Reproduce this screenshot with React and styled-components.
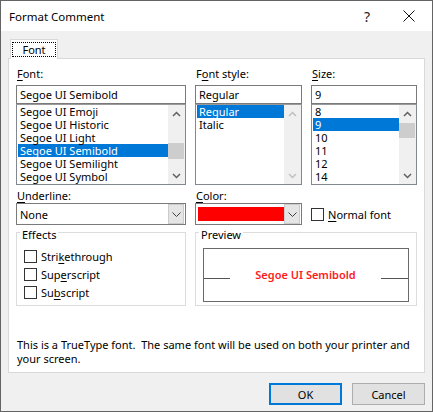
import React from 'react';
import styled, { createGlobalStyle } from 'styled-components';

const GlobalStyle = createGlobalStyle`
  html, body {
    margin: 0;
    padding: 0;
    background: #fff;
  }
  body {
    font-family: "Noto Sans", "Liberation Sans", sans-serif;
    font-size: 11px;
    color: #000;
  }
  * {
    box-sizing: border-box;
  }
`;

const Window = styled.div`
  width: 433px;
  height: 412px;
  border: 1px solid #646464;
  background: #f0f0f0;
  display: flex;
  flex-direction: column;
  overflow: hidden;
`;

const TitleBar = styled.div`
  height: 30px;
  flex-shrink: 0;
  background: #fff;
  display: flex;
  align-items: center;
  padding-left: 8px;
`;

const Title = styled.div`
  flex: 1;
  font-size: 11.5px;
`;

const TitleButton = styled.div`
  width: 46px;
  height: 30px;
  display: flex;
  align-items: center;
  justify-content: center;
  font-size: 14px;
  color: #222;
  padding-left: ${p => p.$shift || 0}px;
`;

const Body = styled.div`
  flex: 1;
  display: flex;
  flex-direction: column;
  padding: 8px 7px 7px 7px;
`;

const TabStrip = styled.div`
  display: flex;
`;

const Tab = styled.div`
  position: relative;
  z-index: 1;
  margin-left: 2px;
  margin-bottom: -1px;
  width: 48px;
  height: 20px;
  padding: 2px 1px 0 1px;
  border: 1px solid #d9d9d9;
  border-bottom: none;
  background: #fff;
`;

const FocusRect = styled.div`
  width: 44px;
  height: 15px;
  border: 1px dotted #000;
  display: flex;
  align-items: center;
  justify-content: center;
  line-height: 13px;
`;

const Panel = styled.div`
  background: #fff;
  border: 1px solid #d9d9d9;
  padding: 7px 7px 6px 7px;
`;

const Grid = styled.div`
  display: grid;
  grid-template-columns: 170px 107px 106px;
  column-gap: 9px;
`;

const Field = styled.div`
  display: flex;
  flex-direction: column;
`;

const Label = styled.div`
  line-height: 15px;
  margin: ${p => (p.$spaced ? '3px 0 0 1px' : '0 0 4px 1px')};
  white-space: nowrap;
`;

const Key = styled.span`
  text-decoration: underline;
  text-underline-offset: 2px;
  text-decoration-thickness: 1px;
`;

const TextBox = styled.div`
  height: 19px;
  border: 1px solid #7a7a7a;
  padding-left: 3px;
  line-height: 17px;
  background: #fff;
`;

const ListBox = styled.div`
  height: 81px;
  border: 1px solid #828790;
  border-top-color: #9a9a9a;
  display: flex;
  background: #fff;
`;

const Items = styled.div`
  flex: 1;
  padding-left: 1px;
`;

const Item = styled.div`
  height: 13px;
  line-height: 13px;
  padding-left: 2px;
  white-space: nowrap;
  background: ${p => (p.$selected ? '#0078d7' : 'transparent')};
  color: ${p => (p.$selected ? '#fff' : '#000')};
`;

const Scrollbar = styled.div`
  width: 17px;
  display: flex;
  flex-direction: column;
  background: #f0f0f0;
`;

const Arrow = styled.div`
  height: 17px;
  display: flex;
  align-items: center;
  justify-content: center;
`;

const Track = styled.div`
  flex: 1;
`;

const Thumb = styled.div`
  margin-top: ${p => p.$offset}px;
  height: ${p => p.$size}px;
  margin-right: 1px;
  background: #cdcdcd;
`;

const Combo = styled.div`
  height: 22px;
  border: 1px solid #7a7a7a;
  background: #fff;
  display: flex;
  align-items: center;
`;

const ComboText = styled.div`
  flex: 1;
  padding-left: 3px;
`;

const Swatch = styled.div`
  width: 86px;
  height: 14px;
  margin-left: 2px;
  margin-right: auto;
  background: #ff0000;
`;

const DropButton = styled.div`
  width: 16px;
  height: 20px;
  margin-right: 1px;
  background: #e5e5e5;
  border: 1px solid #cbcbcb;
  display: flex;
  align-items: center;
  justify-content: center;
`;

const CheckRow = styled.div`
  display: flex;
  align-items: center;
  gap: 4px;
  height: ${p => p.$height || 18}px;
  align-self: ${p => (p.$end ? 'end' : 'auto')};
`;

const CheckBox = styled.div`
  width: 13px;
  height: 13px;
  border: 1px solid #333;
  background: #fff;
  flex-shrink: 0;
`;

const GroupBox = styled.div`
  grid-column: ${p => p.$span || 'auto'};
  height: 74px;
  margin-top: 7px;
  border: 1px solid #dcdcdc;
  display: flex;
  flex-direction: column;
`;

const Caption = styled.div`
  align-self: flex-start;
  margin: -5px 0 0 3px;
  padding: 0 2px;
  line-height: 14px;
  background: #fff;
`;

const CheckList = styled.div`
  display: flex;
  flex-direction: column;
  padding: 5px 0 0 7px;
`;

const PreviewBox = styled.div`
  margin: 6px 7px 0 7px;
  height: 54px;
  border: 1px solid #6a6a6a;
  display: flex;
  flex-direction: column;
  justify-content: center;
`;

const PreviewLine = styled.div`
  display: flex;
  align-items: baseline;
  line-height: 16px;
`;

const Rule = styled.div`
  width: ${p => p.$width}px;
  height: 1px;
  background: #555;
`;

const PreviewText = styled.div`
  flex: 1;
  text-align: center;
  color: #ff1a1a;
  font-weight: 600;
`;

const Note = styled.div`
  margin-top: 32px;
  line-height: 14px;
  padding-left: 1px;
  white-space: nowrap;
`;

const ButtonRow = styled.div`
  display: flex;
  justify-content: flex-end;
  gap: 10px;
  margin-top: 10px;
`;

const Button = styled.div`
  width: 73px;
  height: 22px;
  display: flex;
  align-items: center;
  justify-content: center;
  background: #e1e1e1;
  border: ${p => (p.$default ? '2px solid #0078d7' : '1px solid #adadad')};
`;

const Chevron = ({ up, color = '#606060' }) => (
  <svg width="9" height="6" viewBox="0 0 9 6">
    <polyline
      points={up ? '1,5 4.5,1.5 8,5' : '1,1 4.5,4.5 8,1'}
      fill="none"
      stroke={color}
      strokeWidth="1.5"
    />
  </svg>
);

const ComboChevron = () => (
  <svg width="9" height="5" viewBox="0 0 9 5">
    <polyline points="0.5,0.5 4.5,4.5 8.5,0.5" fill="none" stroke="#404040" strokeWidth="1" />
  </svg>
);

const CloseIcon = () => (
  <svg width="12" height="12" viewBox="0 0 12 12">
    <path d="M0.5 0.5 L11.5 11.5 M11.5 0.5 L0.5 11.5" stroke="#111" strokeWidth="1" />
  </svg>
);

const List = ({ items, selected, thumb }) => (
  <ListBox>
    <Items>
      {items.map(item => (
        <Item key={item} $selected={item === selected}>{item}</Item>
      ))}
    </Items>
    <Scrollbar>
      <Arrow><Chevron up color={thumb ? '#606060' : '#c0c0c0'} /></Arrow>
      <Track>{thumb && <Thumb $offset={thumb[0]} $size={thumb[1]} />}</Track>
      <Arrow><Chevron color={thumb ? '#606060' : '#c0c0c0'} /></Arrow>
    </Scrollbar>
  </ListBox>
);

const fonts = [
  'Segoe UI Emoji',
  'Segoe UI Historic',
  'Segoe UI Light',
  'Segoe UI Semibold',
  'Segoe UI Semilight',
  'Segoe UI Symbol',
];

const styles = ['Regular', 'Italic'];
const sizes = ['8', '9', '10', '11', '12', '14'];

export default function App() {
  return (
    <>
      <GlobalStyle />
      <Window>
        <TitleBar>
          <Title>Format Comment</Title>
          <TitleButton $shift={8}>?</TitleButton>
          <TitleButton><CloseIcon /></TitleButton>
        </TitleBar>
        <Body>
          <TabStrip>
            <Tab><FocusRect>Font</FocusRect></Tab>
          </TabStrip>
          <Panel>
            <Grid>
              <Field>
                <Label><Key>F</Key>ont:</Label>
                <TextBox>Segoe UI Semibold</TextBox>
                <List items={fonts} selected="Segoe UI Semibold" thumb={[21, 16]} />
              </Field>
              <Field>
                <Label>F<Key>o</Key>nt style:</Label>
                <TextBox>Regular</TextBox>
                <List items={styles} selected="Regular" />
              </Field>
              <Field>
                <Label><Key>S</Key>ize:</Label>
                <TextBox>9</TextBox>
                <List items={sizes} selected="9" thumb={[1, 15]} />
              </Field>

              <Field>
                <Label $spaced><Key>U</Key>nderline:</Label>
                <Combo>
                  <ComboText>None</ComboText>
                  <DropButton><ComboChevron /></DropButton>
                </Combo>
              </Field>
              <Field>
                <Label $spaced><Key>C</Key>olor:</Label>
                <Combo>
                  <Swatch />
                  <DropButton><ComboChevron /></DropButton>
                </Combo>
              </Field>
              <CheckRow $end $height={22}>
                <CheckBox />
                <span><Key>N</Key>ormal font</span>
              </CheckRow>

              <GroupBox>
                <Caption>Effects</Caption>
                <CheckList>
                  <CheckRow><CheckBox /><span>Stri<Key>k</Key>ethrough</span></CheckRow>
                  <CheckRow><CheckBox /><span>Sup<Key>e</Key>rscript</span></CheckRow>
                  <CheckRow><CheckBox /><span>Su<Key>b</Key>script</span></CheckRow>
                </CheckList>
              </GroupBox>
              <GroupBox $span="2 / span 2">
                <Caption>Preview</Caption>
                <PreviewBox>
                  <PreviewLine>
                    <Rule $width={26} />
                    <PreviewText>Segoe UI Semibold</PreviewText>
                    <Rule $width={27} />
                  </PreviewLine>
                </PreviewBox>
              </GroupBox>
            </Grid>
            <Note>
              This is a TrueType font.&nbsp; The same font will be used on both your printer and
              <br />
              your screen.
            </Note>
          </Panel>
          <ButtonRow>
            <Button $default>OK</Button>
            <Button>Cancel</Button>
          </ButtonRow>
        </Body>
      </Window>
    </>
  );
}
